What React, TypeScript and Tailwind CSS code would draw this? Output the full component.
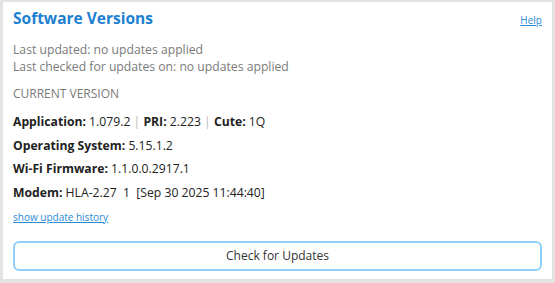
export default function App() {
  return (
    <div
      className="w-[555px] h-[283px] bg-[#e3e3e3] pl-[3px] pr-[3px] pt-[2px] pb-[4px]"
      style={{ fontFamily: '"Open Sans", sans-serif' }}
    >
      <div className="h-full bg-white px-[10px] pt-[4px] flex flex-col">
        <div className="flex items-start justify-between">
          <h1 className="text-[15.5px] font-bold text-[#1c7fcf] leading-[24px]">Software Versions</h1>
          <a className="text-[10px] text-[#2b8ad6] underline mt-[7px]">Help</a>
        </div>
        <div className="mt-[11px] text-[12.2px] text-[#7a7a7a] leading-[17px]">
          <div>Last updated: no updates applied</div>
          <div>Last checked for updates on: no updates applied</div>
        </div>
        <div className="mt-[10px] text-[12px] text-[#7a7a7a] leading-[17px]">CURRENT VERSION</div>
        <div className="mt-[11px] text-[12.2px] text-[#222] flex flex-col gap-[6.5px] leading-[17px]">
          <div>
            <b>Application:</b> 1.079.2 <span className="text-[#bbb]">|</span> <b>PRI:</b> 2.223{' '}
            <span className="text-[#bbb]">|</span> <b>Cute:</b> 1Q
          </div>
          <div>
            <b>Operating System:</b> 5.15.1.2
          </div>
          <div>
            <b>Wi-Fi Firmware:</b> 1.1.0.0.2917.1
          </div>
          <div className="whitespace-pre">
            <b>Modem:</b> HLA-2.27  1  [Sep 30 2025 11:44:40]
          </div>
        </div>
        <a className="mt-[9px] text-[10px] text-[#2b8ad6] underline leading-[15px]">show update history</a>
        <button className="mt-[16px] h-[30px] border-[2px] border-[#8fd0fb] rounded-[6px] text-[12px] text-[#333] bg-white">
          Check for Updates
        </button>
      </div>
    </div>
  );
}
